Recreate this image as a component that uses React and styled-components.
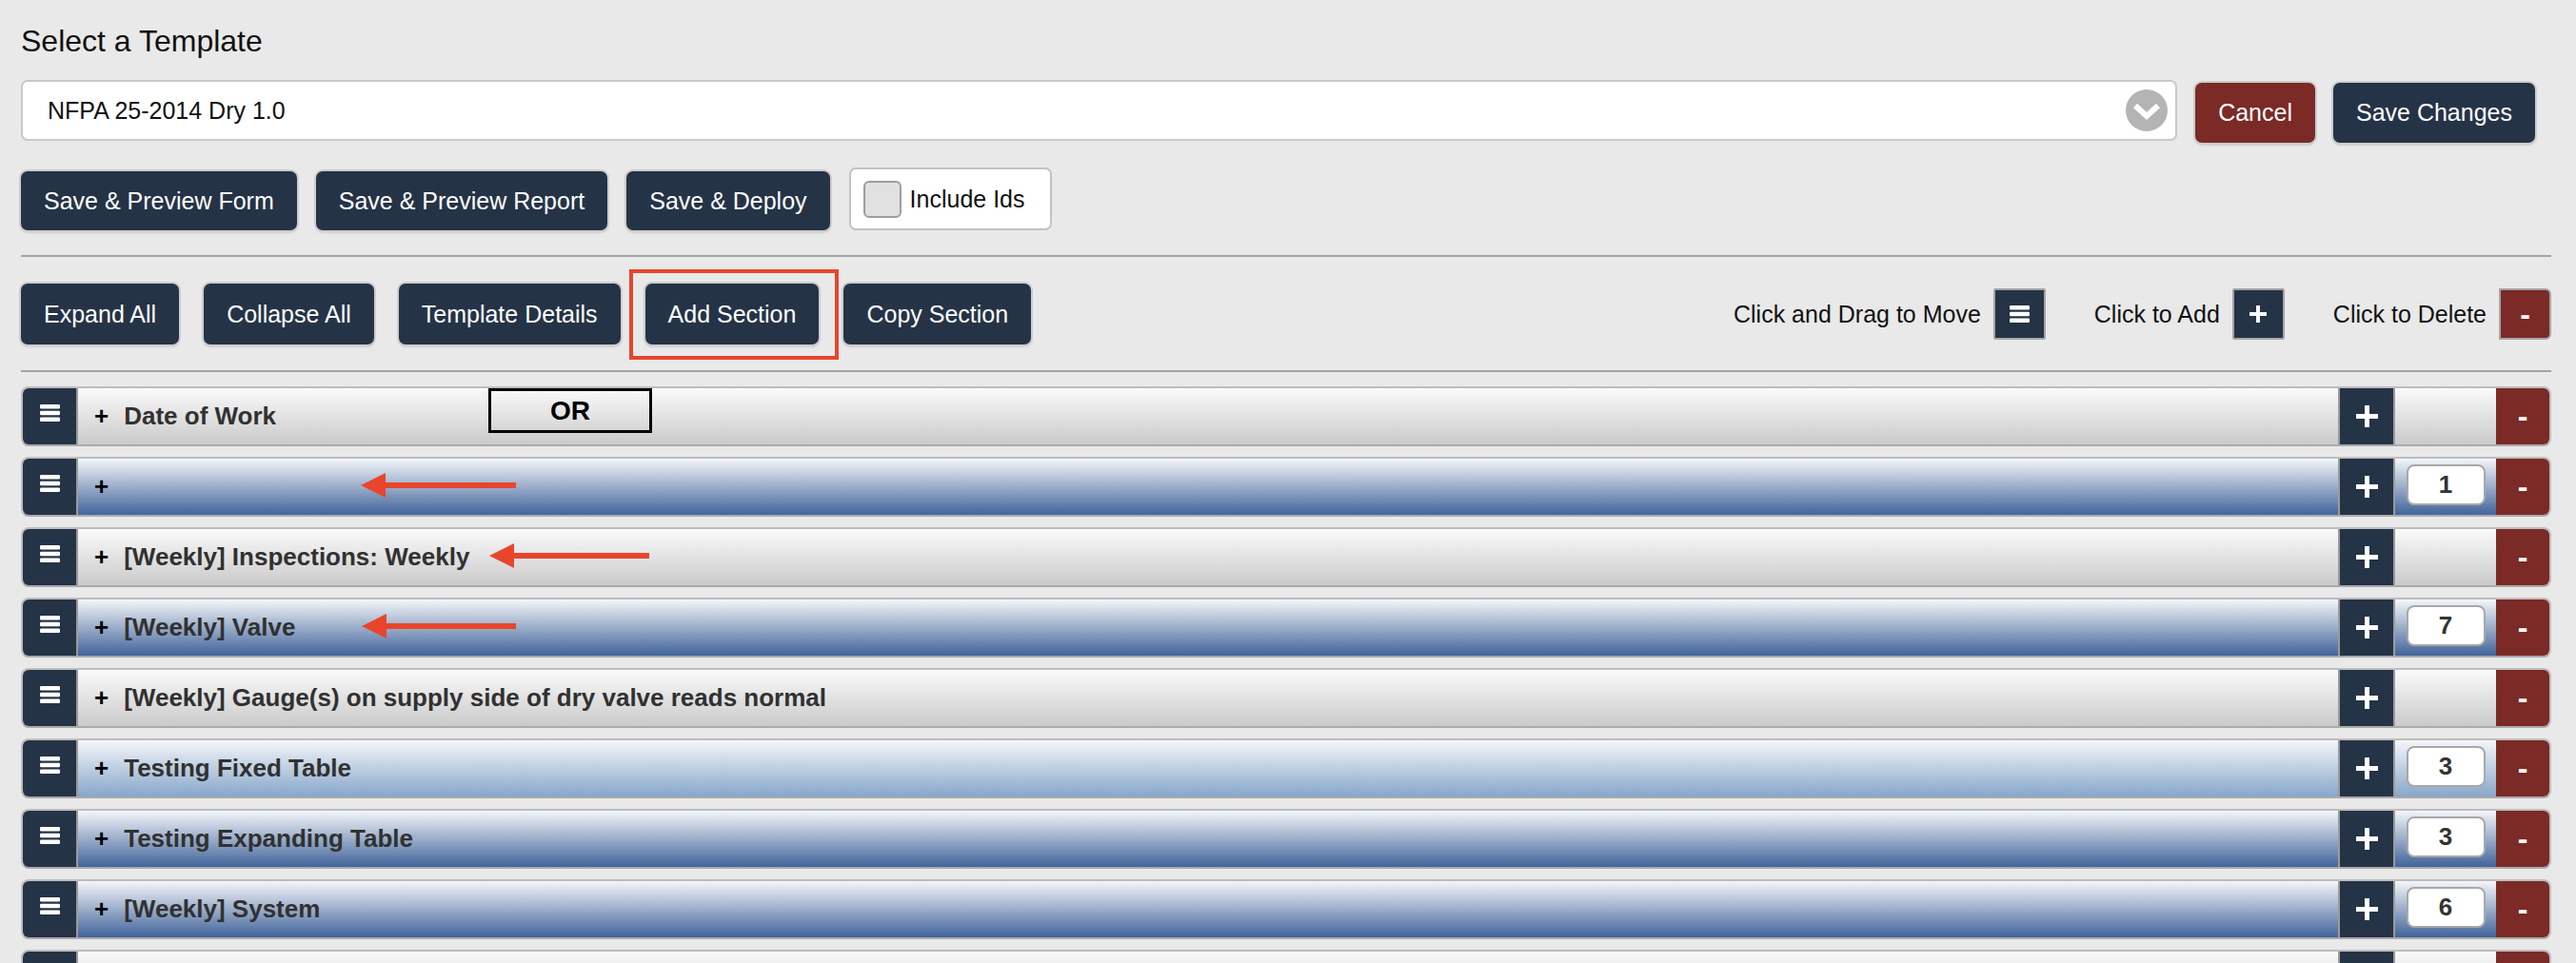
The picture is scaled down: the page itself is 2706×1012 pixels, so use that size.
import React from "react";
import styled, { createGlobalStyle, css } from "styled-components";

const NAVY = "#253347";
const MAROON = "#7b2a26";
const MARK = "#e8452c";

const GlobalStyle = createGlobalStyle`
  body {
    margin: 0;
    background: #e9e9e9;
    color: #111;
    font-family: "Liberation Sans", Arial, Helvetica, sans-serif;
  }
`;

const tones = {
  gray: "linear-gradient(#fafafa, #cacaca)",
  blue: "linear-gradient(#f4f6f9, #41649a)",
  sky: "linear-gradient(#f4f6f9, #87a6ca)",
};

const Page = styled.div`
  padding: 0 26px 0 22px;
`;

const Heading = styled.h1`
  margin: 25px 0 0;
  font-size: 32px;
  line-height: 36px;
  font-weight: normal;
`;

const TopBar = styled.div`
  display: flex;
  align-items: flex-start;
  gap: 19px;
  margin: 23px 17px 0 0;

  & > button {
    margin-top: 3px;
  }
`;

const SelectBox = styled.div`
  flex: 1;
  height: 64px;
  box-sizing: border-box;
  display: flex;
  align-items: center;
  justify-content: space-between;
  padding: 0 8px 0 26px;
  background: #fff;
  border: 2px solid #c8c8c8;
  border-radius: 7px;
  font-size: 25px;
`;

const Button = styled.button`
  position: relative;
  height: ${(p) => p.$h || 62}px;
  padding: 0 24px;
  border: none;
  border-radius: 7px;
  background: ${(p) => (p.$danger ? MAROON : NAVY)};
  color: #fff;
  font: 25px "Liberation Sans", Arial, sans-serif;
  white-space: nowrap;
  box-shadow: 0 0 0 2px #cdcdcd, 0 2px 3px rgba(0, 0, 0, 0.22);
  ${(p) =>
    p.$marked &&
    css`
      &::after {
        content: "";
        position: absolute;
        left: -17px;
        right: -21px;
        top: -15px;
        bottom: -16px;
        border: 4px solid ${MARK};
      }
    `}
`;

const ActionRow = styled.div`
  display: flex;
  align-items: flex-end;
  gap: 20px;
  margin-top: 26px;
`;

const IncludeIds = styled.label`
  display: flex;
  align-items: center;
  gap: 9px;
  height: 66px;
  box-sizing: border-box;
  padding: 0 26px 0 13px;
  background: #fff;
  border: 2px solid #c2c2c2;
  border-radius: 7px;
  font-size: 25px;
`;

const CheckBox = styled.span`
  width: 40px;
  height: 39px;
  box-sizing: border-box;
  background: #e1e1e1;
  border: 2px solid #9d9d9d;
  border-radius: 6px;
`;

const Divider = styled.hr`
  margin: ${(p) => p.$gap}px 0 0;
  height: 2px;
  border: 0;
  background: #a3a3a3;
`;

const Toolbar = styled.div`
  display: flex;
  align-items: center;
  gap: 26px;
  margin-top: 28px;
  height: 64px;
`;

const Legend = styled.div`
  margin-left: auto;
  display: flex;
  align-items: center;
  gap: 51px;
  font-size: 25px;
`;

const LegendItem = styled.div`
  display: flex;
  align-items: center;
  gap: 13px;
`;

const LegendBox = styled.span`
  width: 55px;
  height: 54px;
  box-sizing: border-box;
  display: flex;
  align-items: center;
  justify-content: center;
  background: ${(p) => (p.$danger ? MAROON : NAVY)};
  border: 2px solid #a5a5a5;
  border-radius: ${(p) => (p.$danger ? "0 6px 6px 0" : "2px")};
  color: #fff;
  font-weight: bold;
  font-size: 32px;
`;

const List = styled.div`
  display: flex;
  flex-direction: column;
  gap: 11px;
  margin-top: 15px;
`;

const Row = styled.div`
  position: relative;
  display: flex;
  height: 63px;
  box-sizing: border-box;
  border: 2px solid #bdbdbd;
  border-bottom-color: #aaaaaa;
  border-radius: 8px;
  overflow: hidden;
`;

const Handle = styled.div`
  width: 56px;
  flex: none;
  display: flex;
  align-items: center;
  justify-content: center;
  background: ${NAVY};
  border-right: 2px solid #9b9b9b;

  svg {
    transform: translateY(-4px);
  }
`;

const Title = styled.div`
  flex: 1;
  display: flex;
  align-items: center;
  padding-left: 17px;
  background: ${(p) => tones[p.$tone]};
  color: #313131;
  font-size: 26px;
  font-weight: bold;
`;

const Expander = styled.span`
  color: #000;
  margin-right: 16px;
`;

const AddCell = styled.div`
  width: 56px;
  flex: none;
  display: flex;
  align-items: center;
  justify-content: center;
  background: ${NAVY};
  border-left: 2px solid #9b9b9b;
  border-right: 2px solid #9b9b9b;
`;

const CountCell = styled.div`
  width: 106px;
  flex: none;
  display: flex;
  align-items: center;
  justify-content: center;
  background: ${(p) => tones[p.$tone]};
`;

const CountInput = styled.span`
  width: 83px;
  height: 43px;
  box-sizing: border-box;
  display: flex;
  align-items: center;
  justify-content: center;
  margin-top: -4px;
  background: #fff;
  border: 2px solid #a8a8a8;
  border-radius: 8px;
  color: #333;
  font-size: 26px;
  font-weight: bold;
`;

const DeleteCell = styled.div`
  width: 56px;
  flex: none;
  display: flex;
  align-items: center;
  justify-content: center;
  background: ${MAROON};
  color: #fff;
  font-size: 32px;
  font-weight: bold;
`;

const OrBox = styled.div`
  position: absolute;
  left: 489px;
  top: 0;
  width: 172px;
  height: 47px;
  box-sizing: border-box;
  display: flex;
  align-items: center;
  justify-content: center;
  border: 3px solid #000;
  color: #000;
  font-size: 28px;
  font-weight: bold;
`;

const ArrowMark = styled.svg`
  position: absolute;
  top: calc(50% - 2px);
  transform: translateY(-50%);
`;

const Bars = ({ w = 21, h = 18 }) => (
  <svg width={w} height={h} viewBox="0 0 21 18">
    <rect x="0" y="0" width="21" height="4.5" rx="1.2" fill="#fff" />
    <rect x="0" y="6.75" width="21" height="4.5" rx="1.2" fill="#fff" />
    <rect x="0" y="13.5" width="21" height="4.5" rx="1.2" fill="#fff" />
  </svg>
);

const Plus = ({ s = 23 }) => (
  <svg width={s} height={s} viewBox="0 0 23 23">
    <rect x="9" y="0" width="5" height="23" fill="#fff" />
    <rect x="0" y="9" width="23" height="5" fill="#fff" />
  </svg>
);

const Chevron = () => (
  <svg width="44" height="44" viewBox="0 0 44 44">
    <circle cx="22" cy="22" r="22" fill="#b4b4b4" />
    <polyline
      points="10,17 22,28 34,17"
      fill="none"
      stroke="#fff"
      strokeWidth="6"
    />
  </svg>
);

const Arrow = ({ left, width }) => (
  <ArrowMark
    style={{ left }}
    width={width}
    height="26"
    viewBox={`0 0 ${width} 26`}
  >
    <polygon points="0,13 26,0 26,26" fill={MARK} />
    <rect x="23" y="10" width={width - 23} height="6" fill={MARK} />
  </ArrowMark>
);

const sections = [
  { title: "Date of Work", tone: "gray", or: true },
  { title: "", tone: "blue", count: 1, arrow: [355, 163] },
  { title: "[Weekly] Inspections: Weekly", tone: "gray", arrow: [490, 168] },
  { title: "[Weekly] Valve", tone: "blue", count: 7, arrow: [356, 162] },
  { title: "[Weekly] Gauge(s) on supply side of dry valve reads normal", tone: "gray" },
  { title: "Testing Fixed Table", tone: "sky", count: 3 },
  { title: "Testing Expanding Table", tone: "blue", count: 3 },
  { title: "[Weekly] System", tone: "blue", count: 6 },
  { title: "", tone: "gray" },
];

const SectionRow = ({ title, tone, count, or, arrow }) => (
  <Row>
    <Handle>
      <Bars />
    </Handle>
    <Title $tone={tone}>
      <Expander>+</Expander>
      {title}
    </Title>
    <AddCell>
      <Plus />
    </AddCell>
    <CountCell $tone={tone}>
      {count !== undefined && <CountInput>{count}</CountInput>}
    </CountCell>
    <DeleteCell>-</DeleteCell>
    {or && <OrBox>OR</OrBox>}
    {arrow && <Arrow left={arrow[0]} width={arrow[1]} />}
  </Row>
);

export default function App() {
  return (
    <>
      <GlobalStyle />
      <Page>
        <Heading>Select a Template</Heading>
        <TopBar>
          <SelectBox>
            NFPA 25-2014 Dry 1.0
            <Chevron />
          </SelectBox>
          <Button $h={63} $danger>
            Cancel
          </Button>
          <Button $h={63}>Save Changes</Button>
        </TopBar>

        <ActionRow>
          <Button>Save &amp; Preview Form</Button>
          <Button>Save &amp; Preview Report</Button>
          <Button>Save &amp; Deploy</Button>
          <IncludeIds>
            <CheckBox />
            Include Ids
          </IncludeIds>
        </ActionRow>

        <Divider $gap={26} />

        <Toolbar>
          <Button $h={64}>Expand All</Button>
          <Button $h={64}>Collapse All</Button>
          <Button $h={64}>Template Details</Button>
          <Button $h={64} $marked>
            Add Section
          </Button>
          <Button $h={64}>Copy Section</Button>
          <Legend>
            <LegendItem>
              Click and Drag to Move
              <LegendBox>
                <Bars />
              </LegendBox>
            </LegendItem>
            <LegendItem>
              Click to Add
              <LegendBox>
                <Plus s={18} />
              </LegendBox>
            </LegendItem>
            <LegendItem>
              Click to Delete
              <LegendBox $danger>-</LegendBox>
            </LegendItem>
          </Legend>
        </Toolbar>

        <Divider $gap={27} />

        <List>
          {sections.map((s, i) => (
            <SectionRow key={i} {...s} />
          ))}
        </List>
      </Page>
    </>
  );
}
